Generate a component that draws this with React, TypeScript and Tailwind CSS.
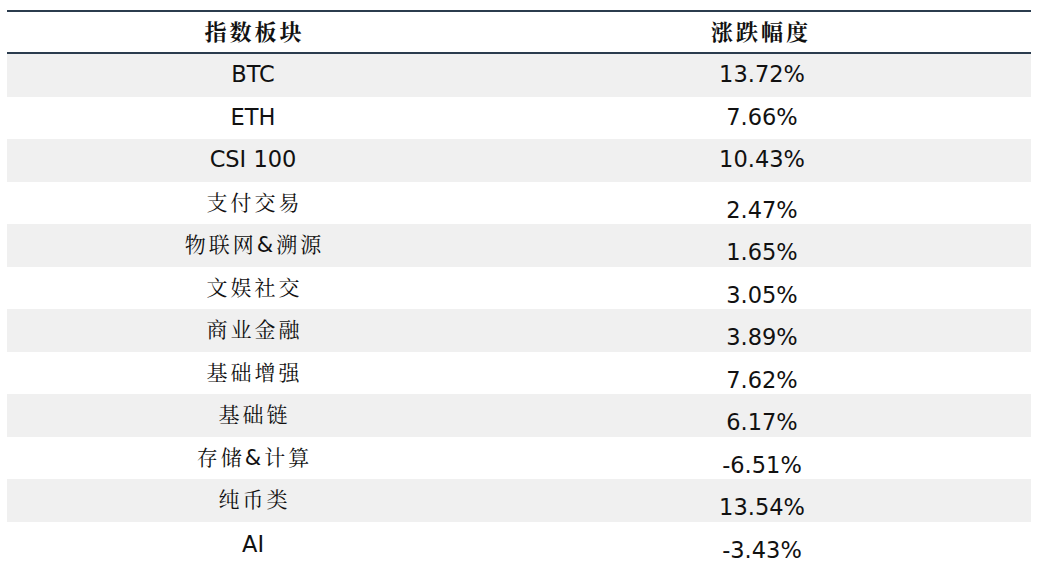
import React from "react";

interface Row {
  name: string;
  change: string;
  cjk?: boolean;
}

const rows: Row[] = [
  { name: "BTC", change: "13.72%" },
  { name: "ETH", change: "7.66%" },
  { name: "CSI 100", change: "10.43%" },
  { name: "支付交易", change: "2.47%", cjk: true },
  { name: "物联网&溯源", change: "1.65%", cjk: true },
  { name: "文娱社交", change: "3.05%", cjk: true },
  { name: "商业金融", change: "3.89%", cjk: true },
  { name: "基础增强", change: "7.62%", cjk: true },
  { name: "基础链", change: "6.17%", cjk: true },
  { name: "存储&计算", change: "-6.51%", cjk: true },
  { name: "纯币类", change: "13.54%", cjk: true },
  { name: "AI", change: "-3.43%" },
];

const font = {
  fontFamily:
    '"DejaVu Sans", "Noto Serif CJK SC", "Noto Sans CJK SC", sans-serif',
};

const App: React.FC = () => {
  return (
    <div className="w-[1039px] h-[564px] bg-white overflow-hidden" style={font}>
      <div className="ml-[7px] mt-[10px] w-[1024px] border-t-[2px] border-[#2b3c4e]">
        <div className="grid grid-cols-[492px_1fr] h-[42px] border-b-[2px] border-[#2b3c4e] text-[#111]">
          <div className="flex items-center justify-center text-[22px] font-bold tracking-[3px] pl-[3px]">
            指数板块
          </div>
          <div className="flex items-center justify-center text-[22px] font-bold tracking-[3px] pr-[8px]">
            涨跌幅度
          </div>
        </div>
        {rows.map((r, i) => (
          <div
            key={r.name}
            className={`grid grid-cols-[492px_1fr] h-[42.5px] text-[#111] ${
              i % 2 === 0 ? "bg-[#f0f0f0]" : "bg-white"
            }`}
          >
            <div
              className={`flex items-center justify-center ${
                r.cjk
                  ? "text-[21px] tracking-[3px] pl-[3px] pb-[2px]"
                  : "text-[22.5px]"
              }`}
            >
              {r.name}
            </div>
            <div
              className={`flex items-center justify-center text-[22.5px] pr-[6px] ${
                i >= 3 ? "pt-[12px]" : ""
              }`}
            >
              {r.change}
            </div>
          </div>
        ))}
      </div>
    </div>
  );
};

export default App;
